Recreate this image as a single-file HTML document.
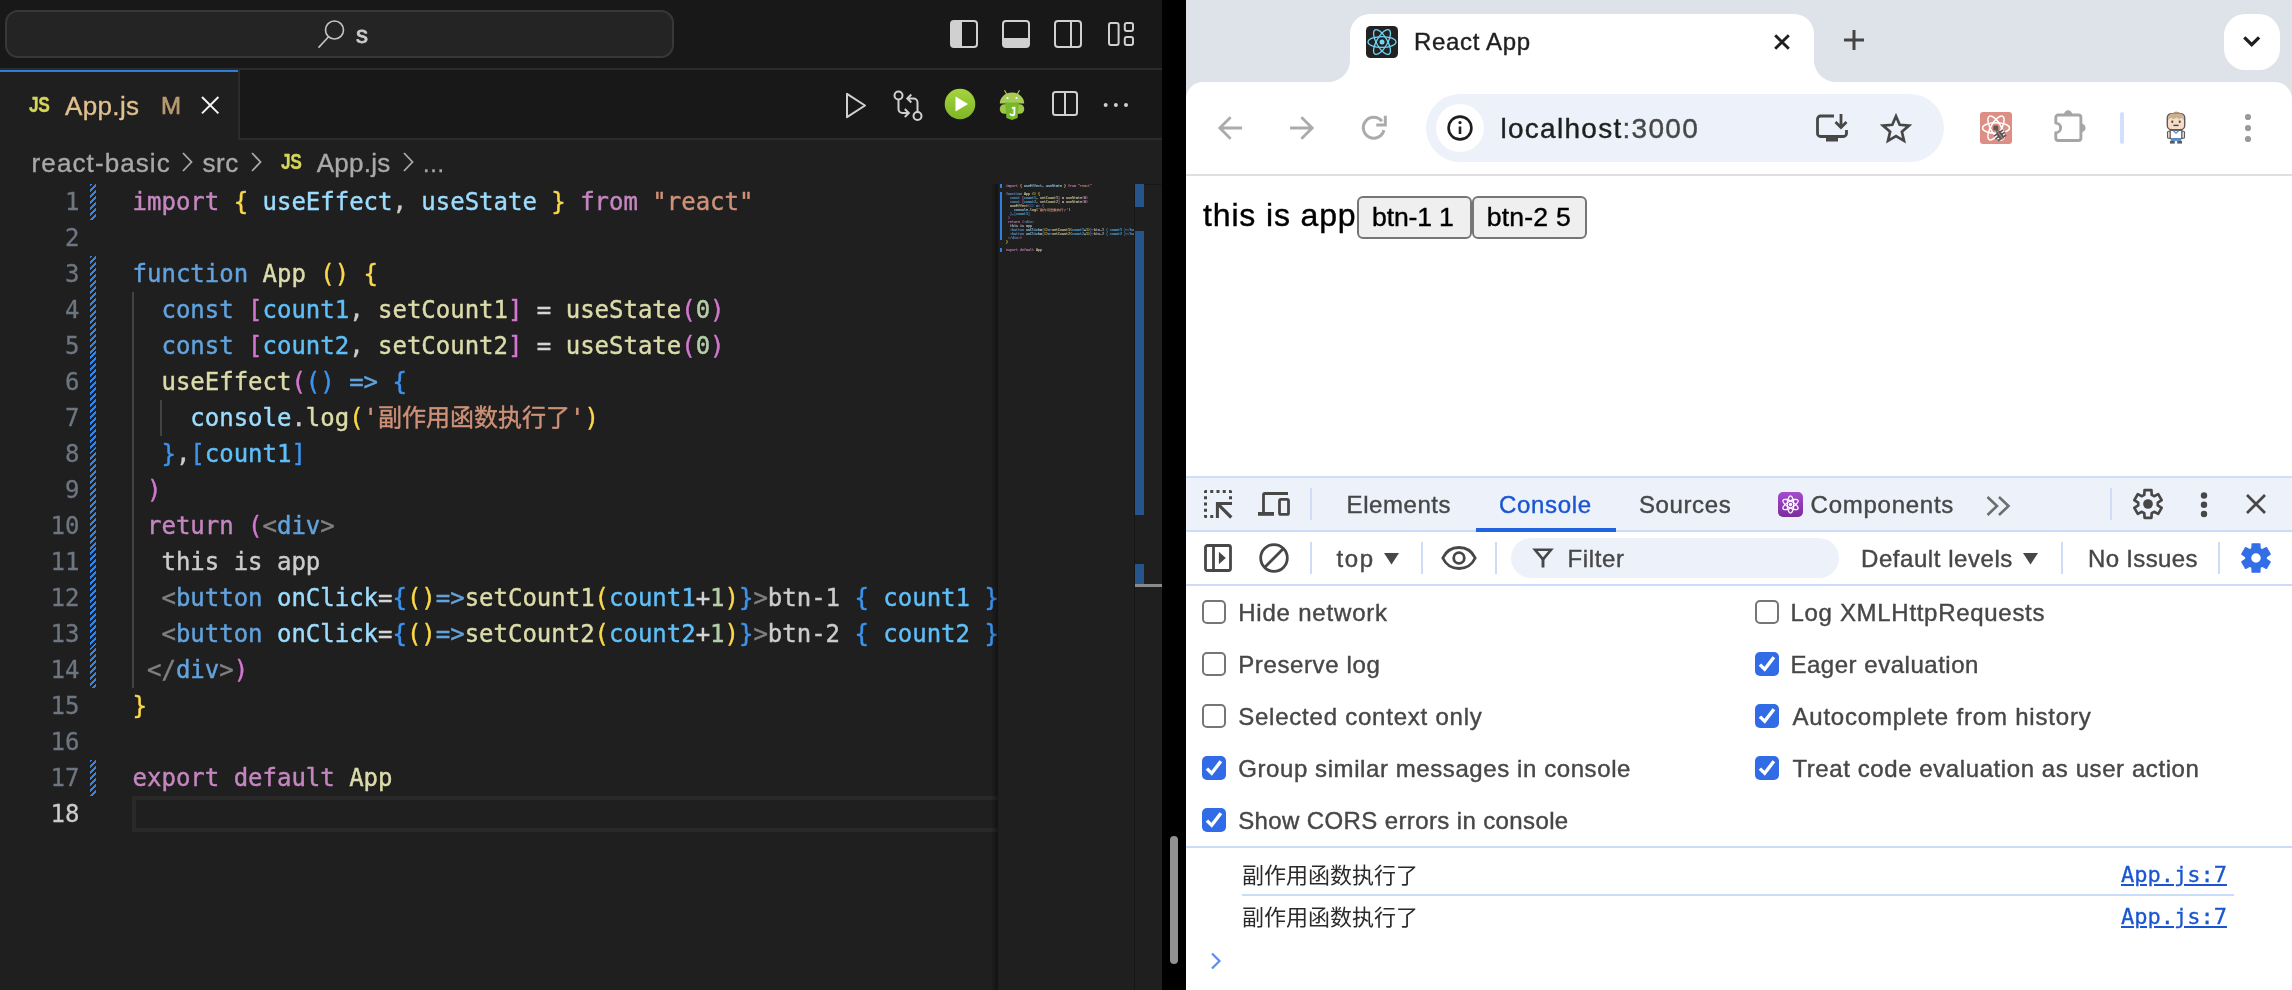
<!DOCTYPE html>
<html lang="en">
<head>
<meta charset="utf-8">
<title>React App</title>
<style>
*{box-sizing:border-box;margin:0;padding:0}
html,body{width:2292px;height:990px;overflow:hidden;background:#000}
body{position:relative;font-family:"Liberation Sans","Noto Sans CJK SC",sans-serif}
.abs{position:absolute}
svg{position:absolute;overflow:visible}
/* ---------- VS Code ---------- */
#vsc{position:absolute;left:0;top:0;width:1162px;height:990px;background:#1f1f1f;overflow:hidden}
#vsc,#chr{will-change:transform}
#title{position:absolute;left:0;top:0;width:1162px;height:70px;background:#181818;border-bottom:2px solid #2b2b2b}
#search{position:absolute;left:5px;top:10px;width:669px;height:48px;border:2px solid #383838;border-radius:13px;background:#242424}
#tabs{position:absolute;left:0;top:70px;width:1162px;height:70px;background:#181818;border-bottom:2px solid #2b2b2b}
#tab{position:absolute;left:0;top:0;width:240px;height:70px;background:#1f1f1f;border-right:2px solid #2b2b2b}
#tab:before{content:"";position:absolute;left:0;top:0;width:238px;height:2px;background:#2b7fd9}
.ui{font-family:"Liberation Sans",sans-serif;white-space:nowrap;position:absolute;line-height:1;-webkit-text-stroke:0.35px}
.js{font-family:"Liberation Sans",sans-serif;font-weight:bold;color:#d6d658;position:absolute;white-space:nowrap;line-height:1;letter-spacing:-0.5px;transform:scaleX(.79);transform-origin:0 0;-webkit-text-stroke:0.3px}
#code{position:absolute;left:0;top:184px;width:998px;height:806px;overflow:hidden;font-family:"DejaVu Sans Mono","Noto Sans CJK SC",monospace;font-size:24px;line-height:36px;color:#cccccc;white-space:pre}
.ln{position:absolute;left:0;width:79.5px;text-align:right;color:#6e7681;height:36px;-webkit-text-stroke:0.3px}
.cl{position:absolute;left:132.6px;height:36px;letter-spacing:-0.012px;-webkit-text-stroke:0.42px}
.k{color:#c586c0}.y{color:#fbd84a}.v{color:#9cdcfe}.s{color:#ce9178}.b{color:#62a3de}.f{color:#dcdcaa}
.p{color:#d477d1}.c{color:#5fbff9}.n{color:#b5cea8}.u{color:#3b94f0}.g{color:#808080}.w{color:#d4d4d4}
.cj{font-family:"Noto Sans CJK SC",sans-serif}
.gut{position:absolute;left:90px;width:6px;background:repeating-linear-gradient(135deg,#3384e6 0 2.100px,transparent 2.100px 4.200px)}
.ig{position:absolute;width:2px;background:#434343}
#mm{position:absolute;left:998px;top:184px;width:137px;height:806px;background:#1f1f1f}
#mm:before{content:"";position:absolute;left:-7px;top:0;width:7px;height:806px;background:linear-gradient(90deg,rgba(0,0,0,0),rgba(0,0,0,.42))}
#mmt{position:absolute;left:8px;top:0;transform-origin:0 0;transform:scale(.1384,.1111);font-family:"DejaVu Sans Mono","Noto Sans CJK SC",monospace;font-size:24px;line-height:36px;white-space:pre;color:#ccc;opacity:.82;-webkit-text-stroke:1.200px}
#ruler{position:absolute;left:1134px;top:184px;width:28px;height:806px;background:#1f1f1f;border-left:1px solid #161616;border-top:1px solid #181818}
.rb{position:absolute;left:0;width:9px;background:#25558b}
/* ---------- Chrome ---------- */
#chr{position:absolute;left:1186px;top:0;width:1106px;height:990px;background:#fff;overflow:hidden}
#strip{position:absolute;left:0;top:0;width:1106px;height:98px;background:#dee2e9}
#toolbar{position:absolute;left:0;top:82px;width:1106px;height:94px;background:#fff;border-radius:17px 17px 0 0;border-bottom:2px solid #dfdfde}
#ctab{position:absolute;left:164px;top:14px;width:464px;height:70px;background:#fff;border-radius:20px 20px 0 0}
#ctab:before,#ctab:after{content:"";position:absolute;bottom:2px;width:22px;height:22px;background:radial-gradient(circle at 0 0,rgba(255,255,255,0) 21.5px,#fff 22.5px)}
#ctab:before{left:-22px}
#ctab:after{right:-22px;background:radial-gradient(circle at 100% 0,rgba(255,255,255,0) 21.5px,#fff 22.5px)}
#url{position:absolute;left:240px;top:94px;width:518px;height:68px;border-radius:34px;background:#edf2fa}
.sf{font-family:"Liberation Sans","Noto Sans CJK SC",sans-serif;position:absolute;white-space:nowrap;line-height:1;-webkit-text-stroke:0.4px}
#dt{position:absolute;left:0;top:476px;width:1106px;height:514px;background:#fff;border-top:2px solid #d0defa}
#dtabs{position:absolute;left:0;top:0;width:1106px;height:54px;background:#edf2fa;border-bottom:2px solid #cbdcf9}
#ctool{position:absolute;left:0;top:54px;width:1106px;height:54px;background:#fff;border-bottom:2px solid #cbdcf9}
.sep{position:absolute;width:2px;background:#cfdcf6}
.cb{position:absolute;width:24px;height:24px;border:2px solid #767676;border-radius:5px;background:#fff}
.cb.on{border:none;background:#316be6}
.dtx{color:#474747;font-size:24px}
.lnk{font-family:"DejaVu Sans Mono",monospace;font-size:22px;color:#1a56d1;text-decoration:underline;-webkit-text-stroke:0.3px;text-underline-offset:2px}
.cb.on:after{content:"";position:absolute;left:0;top:0;width:24px;height:24px;background:#fff;clip-path:polygon(15.5% 57.6%,41.2% 82.8%,84.4% 26.0%,73.1% 17.4%,39.6% 61.4%,25.4% 47.4%)}
.cj{line-height:0}
</style>
</head>
<body>
<div id="vsc">
<div id="title">
  <div id="search"></div>
  <svg style="left:316px;top:18px" width="34" height="34" viewBox="0 0 34 34"><circle cx="18.5" cy="12" r="9" fill="none" stroke="#c5c5c5" stroke-width="1.6"/><path d="M12.6 18.8 L2.5 29.6" stroke="#c5c5c5" stroke-width="1.6" fill="none"/></svg>
  <div class="ui" style="left:356.00px;top:23.2px;font-size:24px;-webkit-text-stroke:0.8px;color:#cccccc">s</div>
  <!-- layout icons -->
  <svg style="left:950px;top:20px" width="28" height="28" viewBox="0 0 28 28"><rect x="1" y="1" width="26" height="26" rx="3" fill="none" stroke="#d0d0d0" stroke-width="2"/><path d="M1 4a3 3 0 0 1 3-3h8v26h-8a3 3 0 0 1-3-3z" fill="#d0d0d0"/></svg>
  <svg style="left:1002px;top:20px" width="28" height="28" viewBox="0 0 28 28"><rect x="1" y="1" width="26" height="26" rx="3" fill="none" stroke="#d0d0d0" stroke-width="2"/><path d="M1 18h26v6a3 3 0 0 1-3 3h-20a3 3 0 0 1-3-3z" fill="#d0d0d0"/></svg>
  <svg style="left:1054px;top:20px" width="28" height="28" viewBox="0 0 28 28"><rect x="1" y="1" width="26" height="26" rx="3" fill="none" stroke="#d0d0d0" stroke-width="2"/><path d="M17 1v26" stroke="#d0d0d0" stroke-width="2"/></svg>
  <svg style="left:1108px;top:22px" width="27" height="24" viewBox="0 0 27 24"><rect x="1" y="1" width="9.6" height="22" rx="2" fill="none" stroke="#d0d0d0" stroke-width="2"/><rect x="16.8" y="1" width="8.2" height="8" rx="2" fill="none" stroke="#d0d0d0" stroke-width="2"/><rect x="16.8" y="15" width="8.2" height="8" rx="2" fill="none" stroke="#d0d0d0" stroke-width="2"/></svg>
</div>
<div id="tabs">
  <div id="tab">
    <div class="js" style="left:29px;top:23.600px;font-size:22px">JS</div>
    <div class="ui" style="left:65.00px;letter-spacing:0.360px;top:22.6px;font-size:26px;color:#e2c08d">App.js</div>
    <div class="ui" style="left:161.00px;top:24.4px;font-size:24px;color:#b99a70;-webkit-text-stroke:0.7px">M</div>
    <svg style="left:201px;top:26px" width="18" height="18" viewBox="0 0 18 18"><path d="M1 1L17.400 17.400M17.400 1L1 17.400" stroke="#f4f4f4" stroke-width="2" fill="none"/></svg>
  </div>
  <!-- editor actions -->
  <svg style="left:845px;top:22px" width="22" height="27" viewBox="0 0 22 27"><path d="M2 1.8L20 13.5L2 25.2z" fill="none" stroke="#d0d0d0" stroke-width="2" stroke-linejoin="round"/></svg>
  <svg style="left:892px;top:20px" width="32" height="32" viewBox="0 0 32 32"><g fill="none" stroke="#d0d0d0" stroke-width="2"><circle cx="6.5" cy="5.5" r="4"/><circle cx="25.5" cy="26" r="4"/><path d="M6.500 9.500v9.500a4 4 0 0 0 4 4h6"/><path d="M12.800 19l4 4-4 4"/><path d="M25.500 22v-9.500a4 4 0 0 0-4-4h-6.500"/><path d="M19.300 4.500l-4 4 4 4"/></g></svg>
  <svg style="left:944px;top:18px" width="32" height="32" viewBox="0 0 32 32"><defs><linearGradient id="gp" x1="0" y1="0" x2="0" y2="1"><stop offset="0" stop-color="#a4d53f"/><stop offset="1" stop-color="#7fb425"/></linearGradient></defs><circle cx="16" cy="16" r="15.3" fill="url(#gp)"/><path d="M11.5 8.5L24 16L11.5 23.5z" fill="#fff"/></svg>
  <svg style="left:999px;top:19px" width="26" height="32" viewBox="0 0 26 32"><path d="M5.5 1.2l2.300 4M20.500 1.200l-2.300 4" stroke="#a3c94f" stroke-width="1.200" fill="none"/><path d="M0.800 14.500A12.200 11 0 0 1 25.200 14.500z" fill="#a7ca58"/><rect x="0.800" y="15.200" width="24.400" height="9.500" rx="4.500" fill="#9dc548"/><circle cx="8.500" cy="9" r="1.100" fill="#fff"/><circle cx="17.500" cy="9" r="1.100" fill="#fff"/><path d="M6.300 13.500h13.400l-1.100 15.500L13 31l-5.600-2z" fill="#74b72a"/><path d="M13 16.500h4.200l-.8 11.300L13 29z" fill="#86c232"/><path d="M15.400 18.800v5.400c0 1.300-.8 2-2.100 2s-2-.6-2.200-1.700M12.800 18.800h3.600" stroke="#fff" stroke-width="1.700" fill="none"/></svg>
  <svg style="left:1052px;top:21px" width="26" height="25" viewBox="0 0 26 25"><rect x="1" y="1" width="24" height="23" rx="2.500" fill="none" stroke="#d0d0d0" stroke-width="2"/><path d="M13 1v23" stroke="#d0d0d0" stroke-width="2"/></svg>
  <svg style="left:1102px;top:32px" width="28" height="6" viewBox="0 0 28 6"><circle cx="3.700" cy="3.100" r="2" fill="#d0d0d0"/><circle cx="13.900" cy="3.100" r="2" fill="#d0d0d0"/><circle cx="24" cy="3.100" r="2" fill="#d0d0d0"/></svg>
</div>
<!-- breadcrumbs -->
<div class="ui" style="left:31.60px;letter-spacing:1.098px;top:150.3px;font-size:26px;color:#a9a9a9">react-basic</div>
<svg style="left:181px;top:151px" width="12" height="22" viewBox="0 0 12 22"><path d="M2 2l8.5 9L2 20" stroke="#a9a9a9" stroke-width="1.8" fill="none"/></svg>
<div class="ui" style="left:202.40px;letter-spacing:0.630px;top:150.3px;font-size:26px;color:#a9a9a9">src</div>
<svg style="left:250px;top:151px" width="12" height="22" viewBox="0 0 12 22"><path d="M2 2l8.5 9L2 20" stroke="#a9a9a9" stroke-width="1.8" fill="none"/></svg>
<div class="js" style="left:281px;top:151.400px;font-size:22px">JS</div>
<div class="ui" style="left:316.80px;letter-spacing:0.216px;top:150.3px;font-size:26px;color:#a9a9a9">App.js</div>
<svg style="left:402px;top:151px" width="12" height="22" viewBox="0 0 12 22"><path d="M2 2l8.5 9L2 20" stroke="#a9a9a9" stroke-width="1.8" fill="none"/></svg>
<div class="ui" style="left:422.00px;top:153px;font-size:23px;color:#a9a9a9">…</div>
<div id="code">
<div class="abs" style="left:132px;top:612px;width:900px;height:36px;border:4px solid #292929"></div>
<div class="ig" style="left:132px;top:108px;height:396px"></div>
<div class="ig" style="left:160px;top:216px;height:36px"></div>
<div class="gut" style="top:0;height:36px"></div>
<div class="gut" style="top:72px;height:432px"></div>
<div class="gut" style="top:576px;height:36px"></div>
<div class="ln" style="top:0px">1</div>
<div class="cl" style="top:0px"><span class="k">import</span> <span class="y">{</span> <span class="v">useEffect</span>, <span class="v">useState</span> <span class="y">}</span> <span class="k">from</span> <span class="s">"react"</span></div>
<div class="ln" style="top:36px">2</div>
<div class="ln" style="top:72px">3</div>
<div class="cl" style="top:72px"><span class="b">function</span> <span class="f">App</span> <span class="y">()</span> <span class="y">{</span></div>
<div class="ln" style="top:108px">4</div>
<div class="cl" style="top:108px">  <span class="b">const</span> <span class="p">[</span><span class="c">count1</span>, <span class="f">setCount1</span><span class="p">]</span> <span class="w">=</span> <span class="f">useState</span><span class="p">(</span><span class="n">0</span><span class="p">)</span></div>
<div class="ln" style="top:144px">5</div>
<div class="cl" style="top:144px">  <span class="b">const</span> <span class="p">[</span><span class="c">count2</span>, <span class="f">setCount2</span><span class="p">]</span> <span class="w">=</span> <span class="f">useState</span><span class="p">(</span><span class="n">0</span><span class="p">)</span></div>
<div class="ln" style="top:180px">6</div>
<div class="cl" style="top:180px">  <span class="f">useEffect</span><span class="p">(</span><span class="u">()</span> <span class="b">=&gt;</span> <span class="u">{</span></div>
<div class="ln" style="top:216px">7</div>
<div class="cl" style="top:216px">    <span class="v">console</span>.<span class="f">log</span><span class="y">(</span><span class="s">'<span class="cj">副作用函数执行了</span>'</span><span class="y">)</span></div>
<div class="ln" style="top:252px">8</div>
<div class="cl" style="top:252px">  <span class="u">}</span>,<span class="u">[</span><span class="c">count1</span><span class="u">]</span></div>
<div class="ln" style="top:288px">9</div>
<div class="cl" style="top:288px"> <span class="p">)</span></div>
<div class="ln" style="top:324px">10</div>
<div class="cl" style="top:324px"> <span class="k">return</span> <span class="p">(</span><span class="g">&lt;</span><span class="b">div</span><span class="g">&gt;</span></div>
<div class="ln" style="top:360px">11</div>
<div class="cl" style="top:360px">  this is app</div>
<div class="ln" style="top:396px">12</div>
<div class="cl" style="top:396px">  <span class="g">&lt;</span><span class="b">button</span> <span class="v">onClick</span><span class="w">=</span><span class="u">{</span><span class="y">()</span><span class="b">=&gt;</span><span class="f">setCount1</span><span class="y">(</span><span class="c">count1</span><span class="w">+</span><span class="n">1</span><span class="y">)</span><span class="u">}</span><span class="g">&gt;</span>btn-1 <span class="u">{</span> <span class="c">count1</span> <span class="u">}</span><span class="g">&lt;/</span><span class="b">button</span><span class="g">&gt;</span></div>
<div class="ln" style="top:432px">13</div>
<div class="cl" style="top:432px">  <span class="g">&lt;</span><span class="b">button</span> <span class="v">onClick</span><span class="w">=</span><span class="u">{</span><span class="y">()</span><span class="b">=&gt;</span><span class="f">setCount2</span><span class="y">(</span><span class="c">count2</span><span class="w">+</span><span class="n">1</span><span class="y">)</span><span class="u">}</span><span class="g">&gt;</span>btn-2 <span class="u">{</span> <span class="c">count2</span> <span class="u">}</span><span class="g">&lt;/</span><span class="b">button</span><span class="g">&gt;</span></div>
<div class="ln" style="top:468px">14</div>
<div class="cl" style="top:468px"> <span class="g">&lt;/</span><span class="b">div</span><span class="g">&gt;</span><span class="p">)</span></div>
<div class="ln" style="top:504px">15</div>
<div class="cl" style="top:504px"><span class="y">}</span></div>
<div class="ln" style="top:540px">16</div>
<div class="ln" style="top:576px">17</div>
<div class="cl" style="top:576px"><span class="k">export</span> <span class="k">default</span> <span class="f">App</span></div>
<div class="ln" style="top:612px;color:#cccccc">18</div>
</div>
<div id="mm"><div class="abs" style="left:2px;top:0;width:2px;height:4px;background:#2f7ee0"></div><div class="abs" style="left:2px;top:8px;width:2px;height:48px;background:#2f7ee0"></div><div class="abs" style="left:2px;top:64px;width:2px;height:4px;background:#2f7ee0"></div>
<div class="abs" style="left:0;top:0;width:137px;height:120px;overflow:hidden"><div id="mmt"><span class="k">import</span> <span class="y">{</span> <span class="v">useEffect</span>, <span class="v">useState</span> <span class="y">}</span> <span class="k">from</span> <span class="s">"react"</span>

<span class="b">function</span> <span class="f">App</span> <span class="y">()</span> <span class="y">{</span>
  <span class="b">const</span> <span class="p">[</span><span class="c">count1</span>, <span class="f">setCount1</span><span class="p">]</span> <span class="w">=</span> <span class="f">useState</span><span class="p">(</span><span class="n">0</span><span class="p">)</span>
  <span class="b">const</span> <span class="p">[</span><span class="c">count2</span>, <span class="f">setCount2</span><span class="p">]</span> <span class="w">=</span> <span class="f">useState</span><span class="p">(</span><span class="n">0</span><span class="p">)</span>
  <span class="f">useEffect</span><span class="p">(</span><span class="u">()</span> <span class="b">=&gt;</span> <span class="u">{</span>
    <span class="v">console</span>.<span class="f">log</span><span class="y">(</span><span class="s">'<span class="cj">副作用函数执行了</span>'</span><span class="y">)</span>
  <span class="u">}</span>,<span class="u">[</span><span class="c">count1</span><span class="u">]</span>
 <span class="p">)</span>
 <span class="k">return</span> <span class="p">(</span><span class="g">&lt;</span><span class="b">div</span><span class="g">&gt;</span>
  this is app
  <span class="g">&lt;</span><span class="b">button</span> <span class="v">onClick</span><span class="w">=</span><span class="u">{</span><span class="y">()</span><span class="b">=&gt;</span><span class="f">setCount1</span><span class="y">(</span><span class="c">count1</span><span class="w">+</span><span class="n">1</span><span class="y">)</span><span class="u">}</span><span class="g">&gt;</span>btn-1 <span class="u">{</span> <span class="c">count1</span> <span class="u">}</span><span class="g">&lt;/</span><span class="b">button</span><span class="g">&gt;</span>
  <span class="g">&lt;</span><span class="b">button</span> <span class="v">onClick</span><span class="w">=</span><span class="u">{</span><span class="y">()</span><span class="b">=&gt;</span><span class="f">setCount2</span><span class="y">(</span><span class="c">count2</span><span class="w">+</span><span class="n">1</span><span class="y">)</span><span class="u">}</span><span class="g">&gt;</span>btn-2 <span class="u">{</span> <span class="c">count2</span> <span class="u">}</span><span class="g">&lt;/</span><span class="b">button</span><span class="g">&gt;</span>
 <span class="g">&lt;/</span><span class="b">div</span><span class="g">&gt;</span><span class="p">)</span>
<span class="y">}</span>

<span class="k">export</span> <span class="k">default</span> <span class="f">App</span>
</div></div></div>
<div id="ruler"><div class="rb" style="top:-1px;height:23px"></div><div class="rb" style="top:46px;height:284px"></div><div class="rb" style="top:379px;height:20px"></div><div class="abs" style="left:0;top:399px;width:28px;height:3px;background:#8a8a8a"></div></div>

</div>
<div class="abs" style="left:1170px;top:836px;width:8px;height:128px;border-radius:4px;background:#919191"></div>
<div id="chr">
<div id="strip"></div>
<div id="toolbar"></div>
<div id="ctab"></div>
<!-- favicon -->
<svg style="left:180px;top:26px" width="32" height="32" viewBox="0 0 32 32"><rect width="32" height="32" rx="4.5" fill="#222"/><g fill="none" stroke="#6fd6f6" stroke-width="1.300"><ellipse cx="16" cy="16" rx="14" ry="5.400"/><ellipse cx="16" cy="16" rx="14" ry="5.400" transform="rotate(60 16 16)"/><ellipse cx="16" cy="16" rx="14" ry="5.400" transform="rotate(120 16 16)"/></g><circle cx="16" cy="16" r="2.500" fill="#6fd6f6"/></svg>
<div class="sf" style="left:228.00px;letter-spacing:0.675px;top:30px;font-size:24px;color:#1f1f1f">React App</div>
<svg style="left:588px;top:34px" width="16" height="16" viewBox="0 0 16 16"><path d="M1.2 1.2L14.8 14.8M14.8 1.2L1.2 14.8" stroke="#1f1f1f" stroke-width="2.9" fill="none"/></svg>
<svg style="left:658px;top:30px" width="20" height="20" viewBox="0 0 20 20"><path d="M10 0v20M0 10h20" stroke="#444" stroke-width="3" fill="none"/></svg>
<div class="abs" style="left:1038px;top:14px;width:56px;height:56px;border-radius:21px;background:#fff"></div>
<svg style="left:1057.400px;top:36.400px" width="18" height="12" viewBox="0 0 18 12"><path d="M1.300 1.300L8.700 8.700L16.100 1.300" stroke="#1f1f1f" stroke-width="3.300" fill="none"/></svg>
<!-- nav -->
<svg style="left:32px;top:116px" width="24" height="24" viewBox="0 0 24 24"><path d="M12.6 1.2L1.8 12L12.6 22.8M1.8 12H24" stroke="#ababab" stroke-width="2.8" fill="none"/></svg>
<svg style="left:104px;top:116px" width="24" height="24" viewBox="0 0 24 24"><path d="M11.4 1.2L22.2 12L11.4 22.8M22.2 12H0" stroke="#ababab" stroke-width="2.8" fill="none"/></svg>
<svg style="left:175px;top:115px" width="26" height="26" viewBox="0 0 26 26"><path d="M22.870 15.060A10.400 10.400 0 1 1 20.900 6.300" stroke="#ababab" stroke-width="3" fill="none"/><path d="M15.300 10H24.300V.8" stroke="#ababab" stroke-width="3" fill="none"/></svg>
<div id="url"></div>
<div class="abs" style="left:250px;top:104px;width:48px;height:48px;border-radius:24px;background:#fff"></div>
<svg style="left:261px;top:115px" width="26" height="26" viewBox="0 0 26 26"><circle cx="13" cy="13" r="11.4" fill="none" stroke="#1f1f1f" stroke-width="2.6"/><path d="M13 11.5v7.5" stroke="#1f1f1f" stroke-width="2.6"/><circle cx="13" cy="7.6" r="1.6" fill="#1f1f1f"/></svg>
<div class="sf" style="left:314.40px;letter-spacing:1.288px;top:115px;font-size:28px;color:#1f1f1f">localhost<span style="color:#474747">:3000</span></div>
<!-- install icon -->
<svg style="left:630px;top:114px" width="32" height="28" viewBox="0 0 32 28"><path d="M18 2H4.5a3 3 0 0 0-3 3v14.5a3 3 0 0 0 3 3h23a3 3 0 0 0 3-3V16" fill="none" stroke="#474747" stroke-width="2.8"/><path d="M10 23h12v4.5H10z" fill="#474747"/><path d="M25 0v13M19.5 8L25 13.5L30.500 8" fill="none" stroke="#474747" stroke-width="2.8"/></svg>
<!-- star -->
<svg style="left:694px;top:112.500px" width="32" height="31" viewBox="0 0 32 31"><path d="M16 3.2l3.7 8.6 9.3.8-7.1 6.1 2.1 9.1-8-4.8-8 4.800 2.100-9.100-7.100-6.100 9.300-.8z" fill="none" stroke="#474747" stroke-width="2.7" stroke-linejoin="miter"/></svg>
<!-- react devtools ext -->
<svg style="left:794px;top:112px" width="32" height="32" viewBox="0 0 32 32"><rect width="32" height="32" rx="3" fill="#dd8f85"/><g fill="none" stroke="#fff" stroke-width="1.500"><ellipse cx="16" cy="16" rx="13.500" ry="5.200"/><ellipse cx="16" cy="16" rx="13.500" ry="5.200" transform="rotate(60 16 16)"/><ellipse cx="16" cy="16" rx="13.500" ry="5.200" transform="rotate(120 16 16)"/></g><rect x="13.300" y="13.600" width="5" height="5" rx="1.400" fill="#5a5a5a"/><g transform="rotate(-35 20 23)"><ellipse cx="20" cy="23" rx="2.700" ry="5.200" fill="#5a5a5a"/><path d="M14.500 20.500l11 0M14 23.500h12M15 26.500l10 0M20 16v3" stroke="#5a5a5a" stroke-width="1.600" fill="none"/><path d="M20 17.500v11" stroke="#dd8f85" stroke-width=".8"/></g></svg>
<!-- puzzle -->
<svg style="left:867px;top:110px" width="34" height="33" viewBox="0 0 34 33"><path d="M5.300 5H25.400a2.500 2.500 0 0 1 2.500 2.500V28a2.500 2.500 0 0 1-2.500 2.500H5.300a2.500 2.500 0 0 1-2.500-2.500V22.700a4.800 4.800 0 0 0 0-9.600V7.500a2.500 2.500 0 0 1 2.500-2.500z" fill="none" stroke="#a6a6a6" stroke-width="2.900" stroke-linejoin="round"/><path d="M10.800 5.200a4.300 4.900 0 0 1 8.600 0zM27.700 13.600a4.900 4.300 0 0 1 0 8.600z" fill="#a6a6a6"/></svg>
<div class="abs" style="left:934px;top:112px;width:4px;height:32px;border-radius:2px;background:#d3e0fb"></div>
<!-- avatar -->
<svg style="left:980px;top:112px" width="20" height="32" viewBox="0 0 20 32"><rect x="1.300" y="1.600" width="17.400" height="16.200" rx="4.200" fill="#f7ddc8" stroke="#5c5c5c" stroke-width="1.400"/><path d="M2 8V6.200a4.600 4.600 0 0 1 4.600-4.600h6.800a4.600 4.600 0 0 1 4.600 4.600V8l-2.600-2.300l-2.200 1.500l-2.600-1.800l-3 1.800l-2.800-1.400z" fill="#cbb091"/><path d="M7 1.200l3-1l4 .8" stroke="#b79c7e" stroke-width="1.200" fill="none"/><rect x="5.400" y="8.600" width="1.800" height="2.300" fill="#444"/><rect x="12.800" y="8.600" width="1.800" height="2.300" fill="#444"/><rect x="7.400" y="12.700" width="5.200" height="1.400" fill="#444"/><rect x="1.500" y="19.200" width="3" height="7" rx="1" fill="#f7ddc8" stroke="#5c5c5c" stroke-width="1.100"/><rect x="15.500" y="19.200" width="3" height="7" rx="1" fill="#f7ddc8" stroke="#5c5c5c" stroke-width="1.100"/><rect x="4.200" y="18.400" width="11.600" height="8.200" fill="#fff" stroke="#5c5c5c" stroke-width="1.200"/><path d="M7.400 18.800l2.600 2.400l2.600-2.400" stroke="#5b8fd6" stroke-width="1.300" fill="none"/><rect x="4.800" y="26.200" width="10.400" height="2.800" fill="#5b8fd6"/><rect x="4" y="29" width="4.800" height="2.600" fill="#5c5c5c"/><rect x="11.200" y="29" width="4.800" height="2.600" fill="#5c5c5c"/></svg>
<svg style="left:1057px;top:113px" width="10" height="30" viewBox="0 0 10 30"><circle cx="5" cy="4" r="3.100" fill="#9a9a9a"/><circle cx="5" cy="15" r="3.100" fill="#9a9a9a"/><circle cx="5" cy="26" r="3.100" fill="#9a9a9a"/></svg>
<!-- page -->
<div class="sf" style="left:17.00px;letter-spacing:0.850px;top:199px;font-size:32px;color:#000">this is app</div>
<div class="abs" style="left:171px;top:196px;width:115px;height:43px;border:2px solid #767676;border-radius:6px;background:#efefef"></div>
<div class="sf" style="left:186.00px;letter-spacing:-0.150px;top:204px;font-size:26.600px;color:#000">btn-1 1</div>
<div class="abs" style="left:286px;top:196px;width:115px;height:43px;border:2px solid #767676;border-radius:6px;background:#efefef"></div>
<div class="sf" style="left:300.80px;letter-spacing:0.180px;top:204px;font-size:26.600px;color:#000">btn-2 5</div>
<div id="dt">
 <div id="dtabs">
  <!-- inspect -->
  <svg style="left:18px;top:12px" width="28" height="28" viewBox="0 0 28 28"><path d="M9.250 26.500H1.500V1.500H26.500V9.250" fill="none" stroke="#474747" stroke-width="3" stroke-dasharray="3 3.250" stroke-linejoin="round"/><path d="M13.400 28V13.600H28" fill="none" stroke="#474747" stroke-width="3"/><path d="M14 14.200L27.300 27.500" fill="none" stroke="#474747" stroke-width="3.200"/></svg>
  <!-- device -->
  <svg style="left:72px;top:14px" width="32" height="24" viewBox="0 0 32 24"><path d="M30 1.500H7a1.500 1.500 0 0 0-1.500 1.500V20.500" fill="none" stroke="#474747" stroke-width="2.800"/><path d="M0 21.900h16" stroke="#474747" stroke-width="3.800"/><rect x="21.500" y="7.400" width="9" height="15" rx="1.500" fill="none" stroke="#474747" stroke-width="2.800"/></svg>
  <div class="sep" style="left:124px;top:10px;height:32px"></div>
  <div class="sf dtx" style="left:160.60px;letter-spacing:0.566px;top:15px">Elements</div>
  <div class="sf dtx" style="left:313.00px;letter-spacing:0.690px;top:15px;color:#1a56d1">Console</div>
  <div class="abs" style="left:290px;top:50px;width:140px;height:4px;background:#1f63e0"></div>
  <div class="sf dtx" style="left:453.00px;letter-spacing:0.600px;top:15px">Sources</div>
  <!-- atom emoji -->
  <svg style="left:592px;top:14px" width="25" height="25" viewBox="0 0 25 25"><defs><linearGradient id="pu" x1="0" y1="0" x2="0" y2="1"><stop offset="0" stop-color="#a64bd0"/><stop offset="1" stop-color="#7a2d9c"/></linearGradient></defs><rect width="25" height="25" rx="5" fill="url(#pu)"/><g fill="none" stroke="#fff" stroke-width="1.300"><ellipse cx="12.500" cy="12.500" rx="8.600" ry="3.200" transform="rotate(90 12.500 12.500)"/><ellipse cx="12.500" cy="12.500" rx="8.600" ry="3.200" transform="rotate(30 12.500 12.500)"/><ellipse cx="12.500" cy="12.500" rx="8.600" ry="3.200" transform="rotate(150 12.500 12.500)"/></g><circle cx="12.500" cy="12.500" r="1.700" fill="#fff"/></svg>
  <div class="sf dtx" style="left:624.60px;letter-spacing:0.740px;top:15px">Components</div>
  <svg style="left:800px;top:18px" width="24" height="20" viewBox="0 0 24 20"><path d="M1.500 1L11 10L1.500 19M13 1l9.500 9L13 19" fill="none" stroke="#6e6e6e" stroke-width="2.600"/></svg>
  <div class="sep" style="left:924px;top:10px;height:32px"></div>
  <!-- gear outline -->
  <svg id="gear1" style="left:946px;top:10px" width="32" height="32" viewBox="0 0 32 32"><path id="gearp" d="M19.71 6.82L19.44 2.22L12.56 2.22L12.29 6.82L9.90 8.20L5.79 6.14L2.35 12.09L6.20 14.62L6.20 17.38L2.35 19.91L5.79 25.86L9.90 23.80L12.29 25.18L12.56 29.78L19.44 29.78L19.71 25.18L22.10 23.80L26.21 25.86L29.65 19.91L25.80 17.38L25.80 14.62L29.65 12.09L26.21 6.14L22.10 8.20Z" fill="none" stroke="#474747" stroke-width="2.700" stroke-linejoin="round"/><circle cx="16" cy="16" r="4.850" fill="#474747"/></svg>
  <svg style="left:1014px;top:12.5px" width="8" height="28" viewBox="0 0 8 28"><circle cx="4" cy="4.500" r="3.200" fill="#474747"/><circle cx="4" cy="13.800" r="3.200" fill="#474747"/><circle cx="4" cy="23" r="3.200" fill="#474747"/></svg>
  <svg style="left:1060px;top:16px" width="20" height="20" viewBox="0 0 20 20"><path d="M1 1L19 19M19 1L1 19" stroke="#474747" stroke-width="2.800" fill="none"/></svg>
 </div>
 <div id="ctool">
  <svg style="left:18px;top:12px" width="28" height="28" viewBox="0 0 28 28"><rect x="1.500" y="1.500" width="25" height="25" rx="2" fill="none" stroke="#474747" stroke-width="2.800"/><path d="M9.500 1.500v25" stroke="#474747" stroke-width="2.800"/><path d="M14.900 7.700L21.800 14L14.900 20.300z" fill="#474747"/></svg>
  <svg style="left:73px;top:11px" width="30" height="30" viewBox="0 0 30 30"><circle cx="15" cy="15" r="13.300" fill="none" stroke="#474747" stroke-width="2.800"/><path d="M5.800 24.200L24.200 5.800" stroke="#474747" stroke-width="2.800"/></svg>
  <div class="sep" style="left:124px;top:10px;height:32px"></div>
  <div class="sf dtx" style="left:150.40px;letter-spacing:1.620px;top:15px">top</div>
  <svg style="left:198px;top:21px" width="15" height="12" viewBox="0 0 15 12"><path d="M0 0h15L7.500 11.500z" fill="#474747"/></svg>
  <div class="sep" style="left:235px;top:10px;height:32px"></div>
  <svg style="left:255px;top:14px" width="36" height="24" viewBox="0 0 36 24"><path d="M1.800 12C5 5.200 11 1.500 18 1.500S31 5.200 34.200 12C31 18.800 25 22.500 18 22.500S5 18.800 1.800 12z" fill="none" stroke="#474747" stroke-width="2.800"/><circle cx="18" cy="12" r="5.300" fill="none" stroke="#474747" stroke-width="2.800"/></svg>
  <div class="sep" style="left:309px;top:10px;height:32px"></div>
  <div class="abs" style="left:325px;top:6px;width:328px;height:40px;border-radius:20px;background:#edf2fa"></div>
  <svg style="left:347px;top:16px" width="20" height="20" viewBox="0 0 20 20"><path d="M2 1.800H18L10 11.400z" fill="none" stroke="#474747" stroke-width="2.600" stroke-linejoin="miter"/><path d="M10 10.500v9" stroke="#474747" stroke-width="2.900"/></svg>
  <div class="sf dtx" style="left:381.40px;letter-spacing:0.648px;top:15px">Filter</div>
  <div class="sf dtx" style="left:675.00px;letter-spacing:0.554px;top:15px">Default levels</div>
  <svg style="left:837px;top:21px" width="15" height="12" viewBox="0 0 15 12"><path d="M0 0h15L7.500 11.500z" fill="#474747"/></svg>
  <div class="sep" style="left:875px;top:10px;height:32px"></div>
  <div class="sf dtx" style="left:902.00px;letter-spacing:0.338px;top:15px">No Issues</div>
  <div class="sep" style="left:1032px;top:10px;height:32px"></div>
  <svg id="gear2" style="left:1054px;top:10px" width="32" height="32" viewBox="0 0 32 32"><path id="gearp2" d="M19.99 6.61L19.78 1.90L12.22 1.90L12.01 6.61L9.86 7.85L5.68 5.68L1.90 12.22L5.88 14.76L5.88 17.24L1.90 19.78L5.68 26.32L9.86 24.15L12.01 25.39L12.22 30.10L19.78 30.10L19.99 25.39L22.14 24.15L26.32 26.32L30.10 19.78L26.12 17.24L26.12 14.76L30.10 12.22L26.32 5.68L22.14 7.85Z M16 10.5a5.5 5.5 0 1 0 0 11a5.5 5.5 0 1 0 0-11Z" fill="#326ee6" fill-rule="evenodd" stroke="#326ee6" stroke-width="1.500" stroke-linejoin="round"/></svg>
 </div>
 <!-- settings -->
 <div class="cb" style="left:16px;top:122px"></div><div class="sf dtx" style="left:52.20px;letter-spacing:0.802px;top:123px">Hide network</div>
 <div class="cb" style="left:16px;top:174px"></div><div class="sf dtx" style="left:52.20px;letter-spacing:0.622px;top:175px">Preserve log</div>
 <div class="cb" style="left:16px;top:226px"></div><div class="sf dtx" style="left:52.20px;letter-spacing:0.774px;top:227px">Selected context only</div>
 <div class="cb on" style="left:16px;top:278px"></div><div class="sf dtx" style="left:52.20px;letter-spacing:0.585px;top:279px">Group similar messages in console</div>
 <div class="cb on" style="left:16px;top:330px"></div><div class="sf dtx" style="left:52.20px;letter-spacing:0.381px;top:331px">Show CORS errors in console</div>
 <div class="cb" style="left:569px;top:122px"></div><div class="sf dtx" style="left:604.40px;letter-spacing:0.700px;top:123px">Log XMLHttpRequests</div>
 <div class="cb on" style="left:569px;top:174px"></div><div class="sf dtx" style="left:604.40px;letter-spacing:0.528px;top:175px">Eager evaluation</div>
 <div class="cb on" style="left:569px;top:226px"></div><div class="sf dtx" style="left:606.40px;letter-spacing:0.817px;top:227px">Autocomplete from history</div>
 <div class="cb on" style="left:569px;top:278px"></div><div class="sf dtx" style="left:606.40px;letter-spacing:0.586px;top:279px">Treat code evaluation as user action</div>
 <div class="abs" style="left:0;top:368px;width:1106px;height:2px;background:#cbdcf9"></div>
 <!-- messages -->
 <div class="sf" style="left:56px;top:384px;font-size:22px;color:#2a2a2a;-webkit-text-stroke:0;font-family:'Noto Sans CJK SC',sans-serif">副作用函数执行了</div>
 <div class="sf lnk" style="left:935px;top:386px">App.js:7</div>
 <div class="abs" style="left:56px;top:416px;width:992px;height:2px;background:#cbdcf9"></div>
 <div class="sf" style="left:56px;top:426px;font-size:22px;color:#2a2a2a;-webkit-text-stroke:0;font-family:'Noto Sans CJK SC',sans-serif">副作用函数执行了</div>
 <div class="sf lnk" style="left:935px;top:428px">App.js:7</div>
 <svg style="left:24px;top:474px" width="12" height="18" viewBox="0 0 12 18"><path d="M2 1.500L9.500 9L2 16.500" stroke="#5b8def" stroke-width="2.200" fill="none"/></svg>
</div>

</div>
</body>
</html>
